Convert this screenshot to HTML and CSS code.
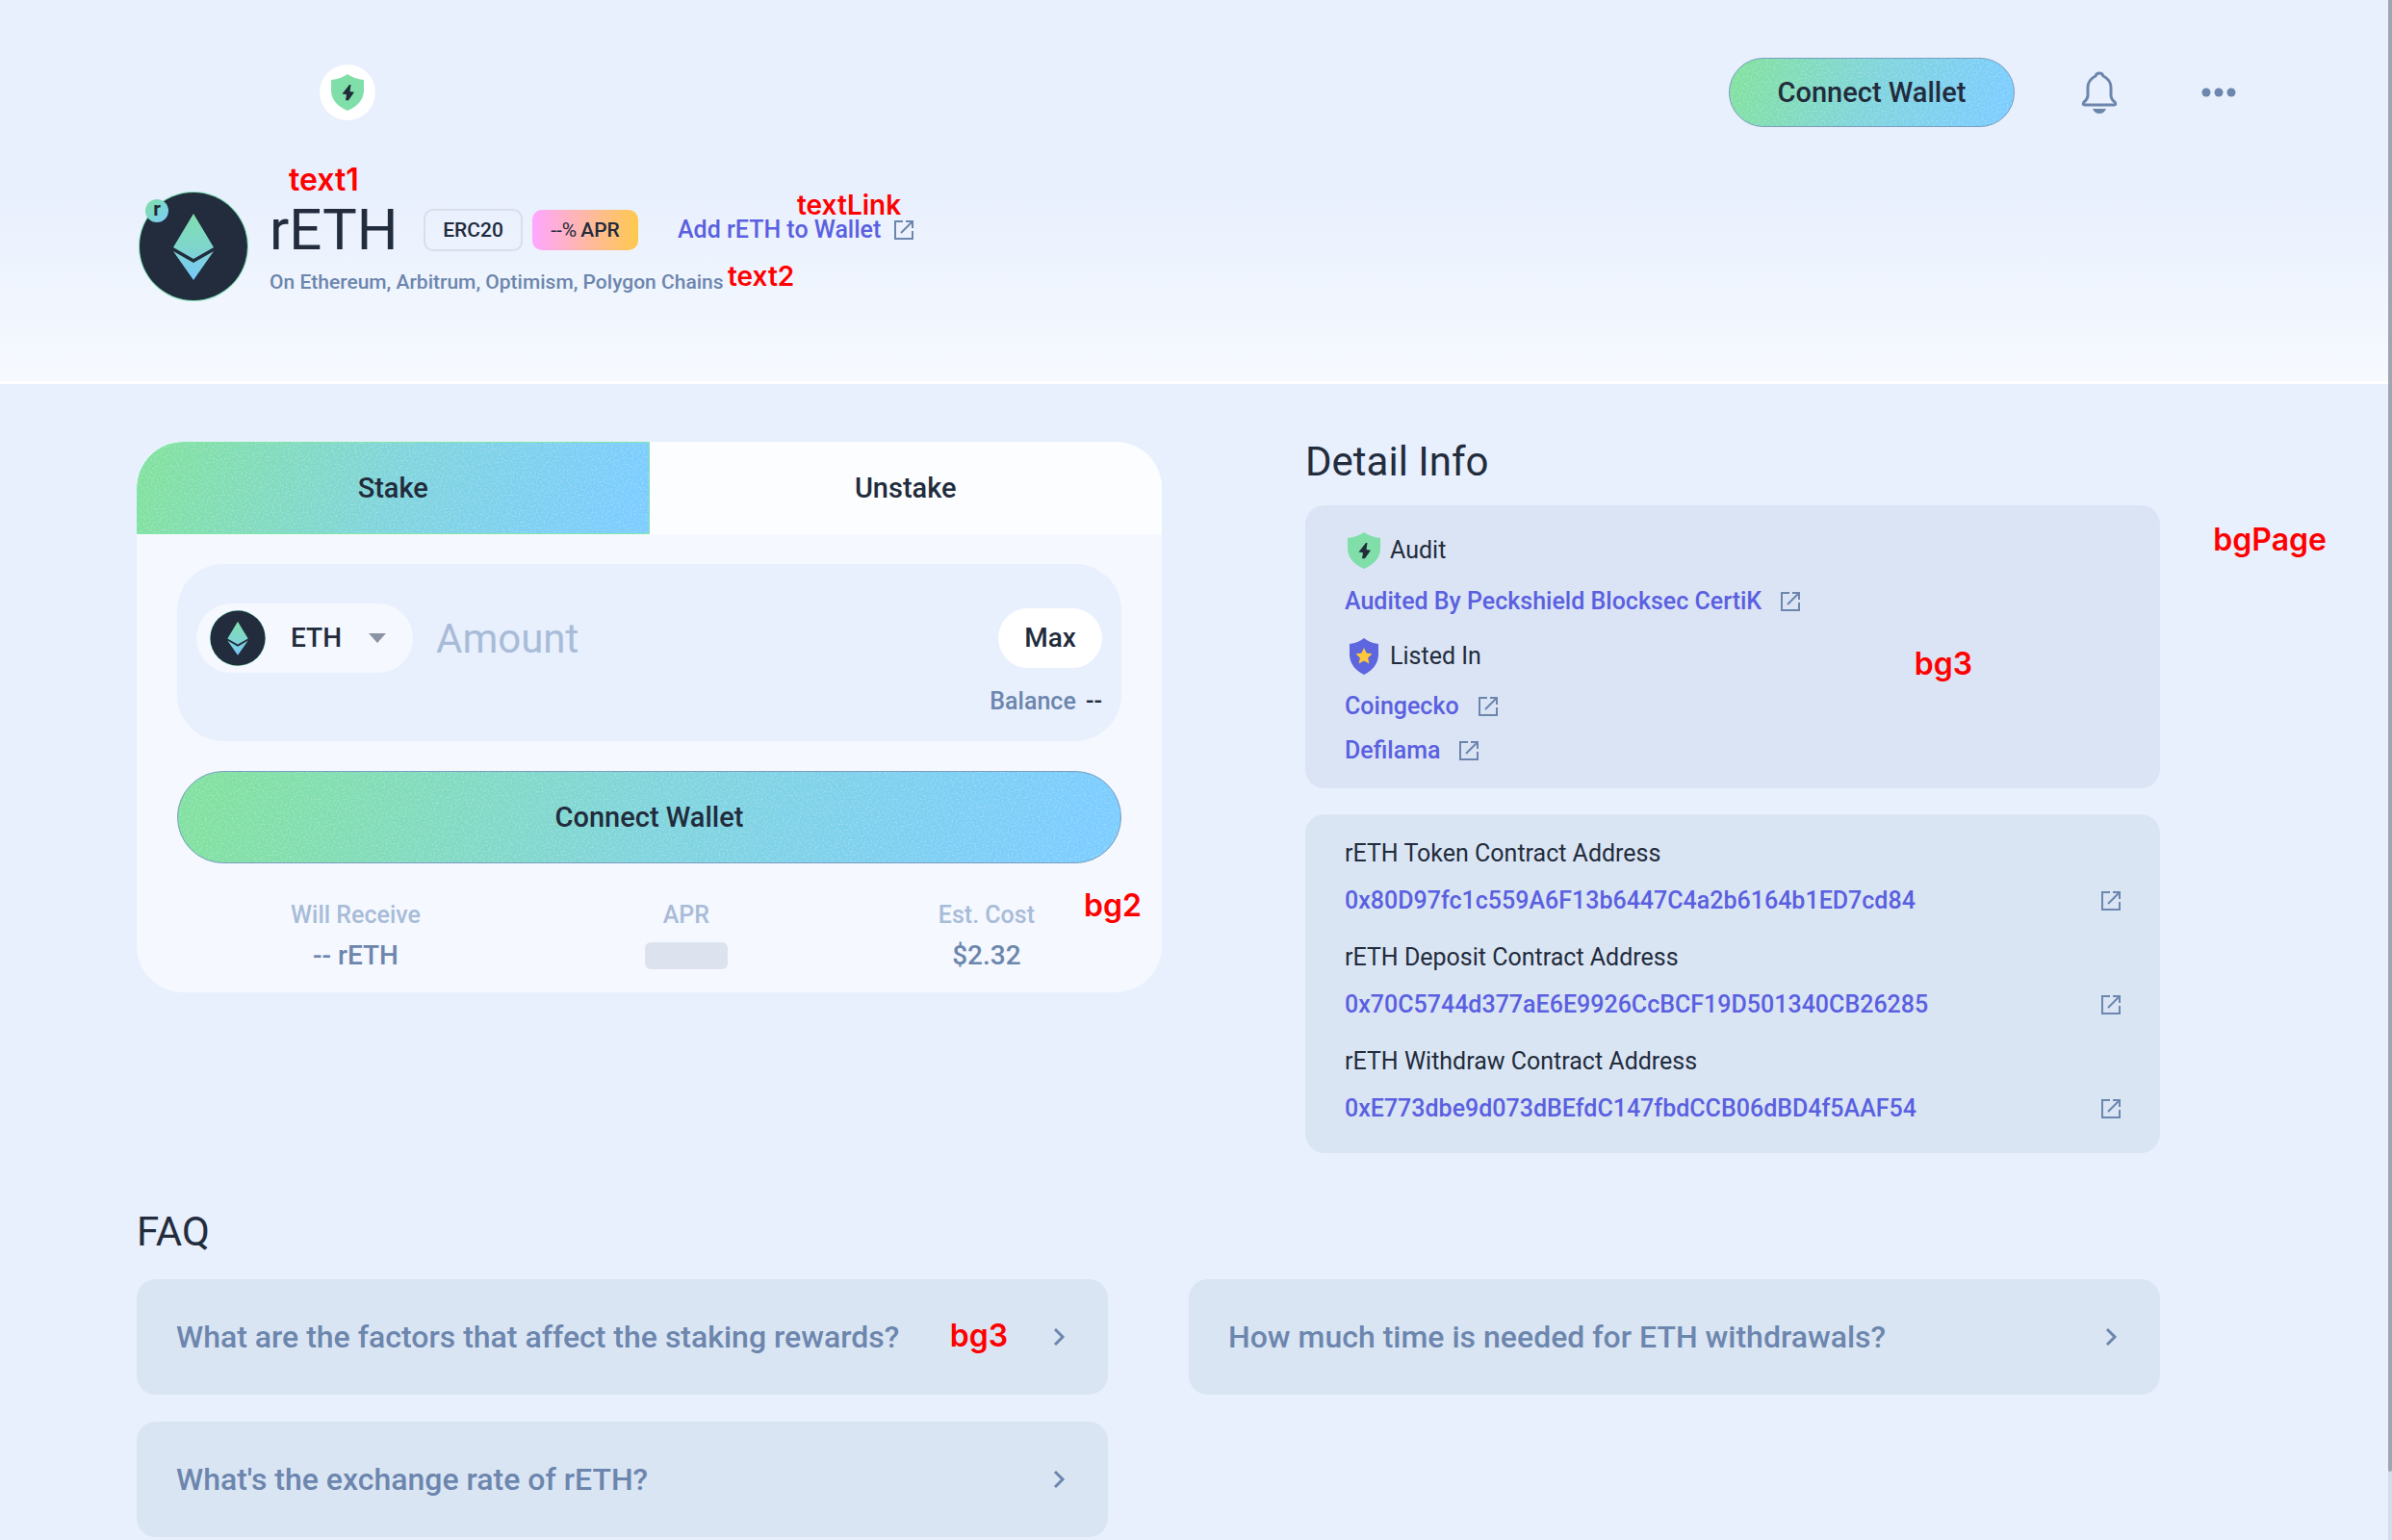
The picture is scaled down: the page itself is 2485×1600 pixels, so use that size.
FILE: index.html
```html
<!DOCTYPE html>
<html lang="en">
<head>
<meta charset="utf-8">
<title>rETH</title>
<meta name="viewport" content="width=device-width, initial-scale=1">
<link rel="stylesheet" href="styles.css">
</head>
<body>
<svg class="defs" width="0" height="0" aria-hidden="true">
  <defs>
    <linearGradient id="mint" gradientUnits="userSpaceOnUse" x1="57" y1="23" x2="57" y2="92">
      <stop offset="0" stop-color="#80dfb0"/>
      <stop offset="0.5" stop-color="#7fd6cc"/>
      <stop offset="1" stop-color="#76c8fc"/>
    </linearGradient>
    <symbol id="i-out" viewBox="0 0 24 24">
      <path d="M11 3H3v18h18v-8M14 3h7v7M21 3L9 15" fill="none" stroke="currentColor" stroke-width="2"/>
    </symbol>
    <symbol id="i-coin" viewBox="0 0 114 114">
      <circle cx="57" cy="57" r="57" fill="#80e0b8"/>
      <circle cx="57" cy="57" r="56" fill="#222c3c"/>
      <path d="M57 23L78 58 57 70 36 58ZM36 62L57 74 78 62 57 92Z" fill="url(#mint)"/>
    </symbol>
    <symbol id="i-shield" viewBox="0 0 34 38">
      <path d="M17 0Q24 5 34 6V18Q33 31 17 38Q1 31 0 18V6Q10 5 17 0Z" fill="#80dfa8"/>
      <path d="M19 11l-7.500 9.500 4.500.8-1 6h3l6-8.500-4.500-.8 1-7z" fill="#222c3c"/>
    </symbol>
    <symbol id="i-star" viewBox="0 0 34 38">
      <path d="M17 0Q23 5 32 6V18Q31 31 17 38Q3 31 2 18V6Q11 5 17 0Z" fill="#5d66df"/>
      <path d="M17 10l2.600 5.600 6 .7-4.500 4.200 1.300 6L17 23.500l-5.400 3 1.300-6-4.500-4.200 6-.7z" fill="#ffc83c"/>
    </symbol>
    <symbol id="i-chev" viewBox="0 0 14 20">
      <path d="M3 2l8 8-8 8" fill="none" stroke="currentColor" stroke-width="3"/>
    </symbol>
  </defs>
</svg>

<header class="hero">
  <div class="topbar">
    <span class="status"><svg class="status-icon"><use href="#i-shield"/></svg></span>
    <div class="actions">
      <button class="btn btn-small" type="button">Connect Wallet</button>
      <button class="icon-btn" type="button" aria-label="Notifications">
        <svg class="bell" viewBox="0 0 38 44"><path d="M19 2Q16 2 15 5Q7 9 7 17V25Q7 29 3 32Q1 35 4 35H34Q37 35 35 32Q31 29 31 25V17Q31 9 23 5Q22 2 19 2Z" fill="none" stroke="currentColor" stroke-width="3"/><path d="M12 39h14q-2 5-7 5t-7-5z" fill="currentColor"/></svg>
      </button>
      <button class="icon-btn" type="button" aria-label="More">
        <svg class="dots" viewBox="0 0 36 10"><circle cx="5" cy="5" r="4.500" fill="currentColor"/><circle cx="18" cy="5" r="4.500" fill="currentColor"/><circle cx="31" cy="5" r="4.500" fill="currentColor"/></svg>
      </button>
    </div>
  </div>
  <div class="token">
    <div class="logo">
      <svg class="logo-coin"><use href="#i-coin"/></svg>
      <span class="logo-badge">r</span>
    </div>
    <div class="token-info">
      <div class="token-row">
        <h1>rETH</h1>
        <span class="tag">ERC20</span>
        <span class="tag tag-apr"><span class="thin">--%</span> APR</span>
        <a class="add" href="#">Add rETH to Wallet <svg class="out"><use href="#i-out"/></svg></a>
      </div>
      <p class="chains">On Ethereum, Arbitrum, Optimism, Polygon Chains</p>
    </div>
  </div>
  <span class="note note-text1">text1</span>
  <span class="note note-small note-link">textLink</span>
  <span class="note note-small note-text2">text2</span>
</header>

<main class="page">
  <div class="columns">
    <section class="stake">
      <div class="tabs">
        <button class="tab tab-on" type="button">Stake</button>
        <button class="tab" type="button">Unstake</button>
      </div>
      <div class="stake-body">
        <div class="amount">
          <div class="amount-row">
            <button class="picker" type="button">
              <svg class="picker-coin"><use href="#i-coin"/></svg>
              <span class="picker-name">ETH</span>
              <svg class="caret" viewBox="0 0 18 10"><path d="M0 0h18l-9 10z" fill="#8a94a4"/></svg>
            </button>
            <input class="amount-input" type="text" placeholder="Amount" aria-label="Amount">
            <button class="max" type="button">Max</button>
          </div>
          <p class="balance">Balance <span class="dark">--</span></p>
        </div>
        <button class="btn btn-wide" type="button">Connect Wallet</button>
        <dl class="stats">
          <div class="stat"><dt>Will Receive</dt><dd>-- rETH</dd></div>
          <div class="stat stat-apr"><dt>APR</dt><dd><span class="skeleton"></span></dd></div>
          <div class="stat"><dt>Est. Cost</dt><dd>$2.32</dd></div>
        </dl>
      </div>
      <span class="note note-bg2">bg2</span>
    </section>

    <section class="detail">
      <h2>Detail Info</h2>
      <div class="card">
        <h3 class="label"><svg class="shield"><use href="#i-shield"/></svg>Audit</h3>
        <a class="link link-audit" href="#">Audited By Peckshield Blocksec CertiK <svg class="out"><use href="#i-out"/></svg></a>
        <h3 class="label label-listed"><svg class="shield"><use href="#i-star"/></svg>Listed In</h3>
        <a class="link" href="#">Coingecko <svg class="out"><use href="#i-out"/></svg></a>
        <a class="link" href="#">Defilama <svg class="out"><use href="#i-out"/></svg></a>
        <span class="note note-bg3">bg3</span>
      </div>
      <div class="card card-contracts">
        <div class="contract"><h3>rETH Token Contract Address</h3><a class="address" href="#">0x80D97fc1c559A6F13b6447C4a2b6164b1ED7cd84 <svg class="out"><use href="#i-out"/></svg></a></div>
        <div class="contract"><h3>rETH Deposit Contract Address</h3><a class="address" href="#">0x70C5744d377aE6E9926CcBCF19D501340CB26285 <svg class="out"><use href="#i-out"/></svg></a></div>
        <div class="contract"><h3>rETH Withdraw Contract Address</h3><a class="address" href="#">0xE773dbe9d073dBEfdC147fbdCCB06dBD4f5AAF54 <svg class="out"><use href="#i-out"/></svg></a></div>
      </div>
    </section>
  </div>

  <section class="faq">
    <h2>FAQ</h2>
    <div class="faq-grid">
      <button class="question" type="button">What are the factors that affect the staking rewards? <svg class="chev"><use href="#i-chev"/></svg><span class="note note-faq">bg3</span></button>
      <button class="question" type="button">How much time is needed for ETH withdrawals? <svg class="chev"><use href="#i-chev"/></svg></button>
      <button class="question" type="button">What's the exchange rate of rETH? <svg class="chev"><use href="#i-chev"/></svg></button>
    </div>
  </section>
</main>
<span class="note note-page">bgPage</span>
<div class="scroll"><div class="scroll-thumb"></div></div>
</body>
</html>
```
FILE: styles.css
```css
* { box-sizing: border-box; }

:root {
  --page: #e8effd;
  --card: #dae5f4;
  --text1: #222c3c;
  --text2: #6c86ad;
  --link: #5a60e0;
}

body {
  margin: 0;
  position: relative;
  min-height: 100vh;
  background: var(--page);
  color: var(--text1);
  font-family: Roboto, "Liberation Sans", sans-serif;
  font-size: 25px;
  line-height: 32px;
  overflow: hidden;
}

h1, h2, h3, p, dl, dd { margin: 0; font-weight: 400; }
h3 { font-size: 25px; }
button { border: 0; padding: 0; background: none; color: inherit; font: inherit; }
a { color: var(--link); text-decoration: none; }
svg { flex: none; display: block; }
.defs { position: absolute; }

/* Header */
.hero {
  position: relative;
  height: 399px;
  padding: 60px 142px 0 144px;
  background: linear-gradient(var(--page) 190px, #f6faff 396px);
  border-bottom: 3px solid #ffffff;
}
.topbar { display: flex; align-items: center; justify-content: space-between; height: 72px; padding-left: 188px; }
.status { display: flex; align-items: center; justify-content: center; width: 58px; height: 58px; border-radius: 50%; background: #fff; }
.status-icon { width: 34px; height: 38px; }
.actions { display: flex; align-items: center; gap: 48px; }
.icon-btn { display: flex; align-items: center; justify-content: center; width: 76px; height: 72px; color: var(--text2); }
.bell { width: 38px; height: 44px; }
.dots { width: 36px; height: 10px; }

.btn, .tab-on {
  background-color: #80d5d8;
  background-image:
    url("data:image/svg+xml,%3Csvg xmlns='http://www.w3.org/2000/svg' width='300' height='100'%3E%3Cfilter id='n'%3E%3CfeTurbulence type='fractalNoise' baseFrequency='.5' numOctaves='2' stitchTiles='stitch'/%3E%3CfeColorMatrix values='0 0 0 0 1 0 0 0 0 1 0 0 0 0 1 .6 0 0 0 -.25'/%3E%3C/filter%3E%3Crect width='300' height='100' filter='url(%23n)'/%3E%3C/svg%3E"),
    linear-gradient(110deg, #80e0a0 5%, #7ed4dc 50%, #7accff 95%);
}
.btn { border: 1px solid #7a9fc0; font-size: 29px; font-weight: 500; }
.btn-small { width: 297px; height: 72px; border-radius: 36px; margin-right: 2px; }
.btn-wide { width: 100%; height: 96px; border-radius: 48px; }

.token { display: flex; gap: 22px; margin-top: 67px; }
.logo { position: relative; width: 114px; height: 114px; }
.logo-coin { width: 114px; height: 114px; }
.logo-badge {
  position: absolute; left: 7px; top: 8px; width: 24px; height: 24px; border-radius: 50%;
  background: linear-gradient(135deg, #80e0a0, #7accff);
  font-size: 21px; line-height: 21px; font-weight: 700; text-align: center;
}
.token-row { display: flex; align-items: center; height: 80px; }
h1 { font-size: 60px; line-height: 80px; width: 160px; }
.tag { display: flex; align-items: center; justify-content: center; width: 103px; height: 44px; border: 2px solid #d8deea; border-radius: 10px; font-size: 21px; font-weight: 500; }
.tag-apr { width: 110px; height: 42px; margin-left: 10px; border: 0; gap: 4px; background: linear-gradient(90deg, #ffa6ff, #ffc94d); }
.thin { font-weight: 400; }
.add { display: flex; align-items: center; gap: 12px; margin-left: 41px; font-weight: 500; }
.out { width: 24px; height: 24px; color: var(--text2); }
.chains { font-size: 21px; font-weight: 500; line-height: 28px; color: var(--text2); }

/* Main */
.page { padding: 60px 241px 0 142px; }
.columns { display: grid; grid-template-columns: 1065fr 888fr; gap: 149px; align-items: start; }

.stake { position: relative; background: #f5f8ff; border-radius: 48px; }
.tabs { display: grid; grid-template-columns: 1fr 1fr; height: 96px; border-radius: 48px 48px 0 0; overflow: hidden; background: #fcfdff; }
.tab { font-size: 29px; font-weight: 500; }
.tab-on { border: 1px solid #80e8a8; border-top-left-radius: 48px; }
.stake-body { padding: 31px 42px 22px; }
.amount { height: 184px; padding: 41px 20px 0; border-radius: 48px; background: var(--page); }
.amount-row { display: flex; align-items: center; height: 72px; }
.picker { display: flex; align-items: center; width: 225px; height: 72px; padding-left: 14px; border-radius: 36px; background: #f5f8ff; }
.picker-coin { width: 58px; height: 58px; }
.picker-name { width: 81px; margin-left: 26px; font-size: 28px; font-weight: 500; text-align: left; }
.caret { width: 18px; height: 10px; }
.amount-input { flex: 1; min-width: 0; height: 60px; margin: 0 24px; padding: 0; border: 0; outline: 0; background: none; font: 400 42px Roboto, sans-serif; color: var(--text1); }
.amount-input::placeholder { color: #a8bcd8; opacity: 1; }
.max { width: 108px; height: 62px; border-radius: 31px; background: #fff; font-size: 28px; font-weight: 500; }
.balance { margin-top: 14px; text-align: right; font-weight: 500; color: var(--text2); }
.dark { color: var(--text1); margin-left: 4px; }
.btn-wide { margin-top: 31px; }
.stats { display: flex; justify-content: space-between; margin-top: 38px; padding: 0 90px 0 118px; text-align: center; }
.stat-apr { margin-left: 14px; }
dt { color: #a8bcd8; font-weight: 500; }
dd { display: flex; align-items: center; justify-content: center; height: 32px; margin-top: 10px; font-size: 28px; font-weight: 500; color: var(--text2); }
.skeleton { width: 86px; height: 28px; border-radius: 6px; background: #dce3ee; }

h2 { font-size: 42px; line-height: 42px; }
.card { position: relative; margin-top: 27px; padding: 28px 41px 16px; border-radius: 20px; background: #dbe4f5; }
h2 + .card { margin-top: 24px; }
.label { display: flex; align-items: center; gap: 10px; height: 38px; margin-left: 3px; }
.label-listed { margin-bottom: 10px; }
.shield { width: 34px; height: 38px; }
.link { display: flex; align-items: center; gap: 18px; height: 46px; width: max-content; font-weight: 500; }
.link-audit { height: 72px; padding-bottom: 4px; }
.card-contracts { padding: 24px 39px 4px 41px; background: var(--card); }
.contract { height: 108px; }
.contract h3 { line-height: 34px; }
.address { display: flex; align-items: center; justify-content: space-between; height: 64px; font-weight: 500; }

.faq { margin-top: 61px; }
.faq-grid { display: grid; grid-template-columns: 1fr 1fr; gap: 28px 84px; margin-top: 28px; }
.question { position: relative; display: flex; align-items: center; justify-content: space-between; height: 120px; padding: 0 44px 0 41px; border-radius: 20px; background: var(--card); font-size: 32px; font-weight: 500; color: var(--text2); text-align: left; }
.chev { width: 14px; height: 20px; }

/* Colour-name annotations pinned over the page */
.note { position: absolute; color: #ff0000; font: 600 32px/32px Inter, sans-serif; }
.note-small { font-size: 28px; }
.note-text1 { left: 300px; top: 171px; }
.note-link { left: 828px; top: 197px; }
.note-text2 { left: 756px; top: 271px; }
.note-bg2 { right: 21px; top: 466px; }
.note-bg3 { right: 195px; top: 149px; }
.note-faq { right: 104px; top: 43px; }
.note-page { right: 68px; top: 545px; }

.scroll { position: absolute; right: 0; top: 0; width: 4px; height: 100%; background: #d4dcec; }
.scroll-thumb { height: 1529px; background: #a0a6b0; border-radius: 0 0 2px 2px; }
```
